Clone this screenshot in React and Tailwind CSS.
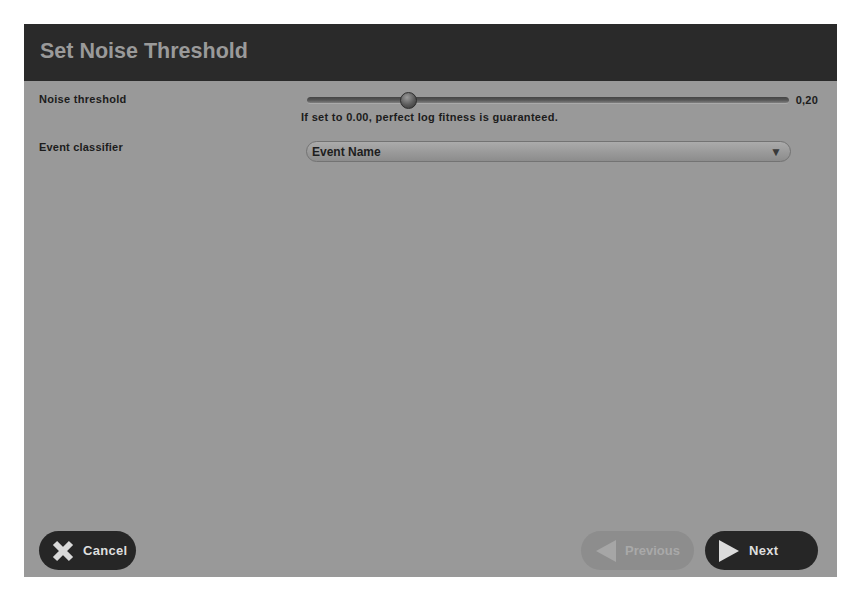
const font = { fontFamily: '"Liberation Sans", Arial, sans-serif' };

function CrossIcon() {
  return (
    <svg width="24" height="24" viewBox="0 0 24 24" className="shrink-0">
      <path d="M4 4 L20 20 M20 4 L4 20" stroke="#d9d9d9" strokeWidth="6" strokeLinecap="butt" />
    </svg>
  );
}

function Triangle({ dir = "right", color }) {
  const d = dir === "right" ? "M1 1 L21 12 L1 23 Z" : "M21 1 L1 12 L21 23 Z";
  return (
    <svg width="22" height="24" viewBox="0 0 22 24" className="shrink-0">
      <path d={d} fill={color} />
    </svg>
  );
}

export default function App() {
  return (
    <div className="w-full h-[601px] bg-white p-6" style={font}>
      <div className="h-full flex flex-col bg-[#999999]">
        <div className="h-[57px] bg-[#2a2a2a] flex items-center pl-4 shrink-0">
          <h1 className="text-[21.5px] font-bold text-[#9a9a9a] leading-none -mt-[2px]">Set Noise Threshold</h1>
        </div>

        <div className="flex-1 flex flex-col pl-[15px] pr-[19px]">
          <div className="grid grid-cols-[262px_1fr] pt-[11px]">
            <div className="text-[11px] font-bold text-[#1c1c1c] leading-4 -mt-px tracking-[0.3px]">Noise threshold</div>
            <div className="flex flex-col">
              <div className="flex items-center h-4">
                <div className="relative flex-1 ml-[6px] h-[7px] rounded-full bg-gradient-to-b from-[#444444] via-[#555555] to-[#808080] border-b border-[#aaaaaa]">
                  <div className="absolute left-[93px] -top-[5px] w-[17px] h-[17px] rounded-full border border-[#2e2e2e] bg-[radial-gradient(circle_at_40%_30%,#9a9a9a,#5a5a5a_55%,#333333)]" />
                </div>
                <span className="ml-[7px] text-[11px] font-bold text-[#1c1c1c] tracking-[0.2px]">0,20</span>
              </div>
              <p className="mt-[3px] text-[11px] font-bold text-[#1c1c1c] leading-[13px] tracking-[0.3px]">
                If set to 0.00, perfect log fitness is guaranteed.
              </p>
            </div>

            <div className="text-[11px] font-bold text-[#1c1c1c] mt-[15px] leading-4 tracking-[0.2px]">Event classifier</div>
            <div className="mt-[17px] pr-[27px]">
              <div className="ml-[5px] h-[21px] rounded-full border border-[#737373] bg-gradient-to-b from-[#ababab] to-[#8c8c8c] flex items-center justify-between pl-[5px] pr-[8px]">
                <span className="text-[12px] font-bold text-[#1e1e1e]">Event Name</span>
                <span className="text-[12px] text-[#3a3a3a] leading-none">▼</span>
              </div>
            </div>
          </div>

          <div className="mt-auto mb-[7px] flex items-center">
            <button className="h-[39px] w-[97px] rounded-full bg-[#262626] flex items-center pl-[12px] gap-[8px]">
              <CrossIcon />
              <span className="text-[13px] font-bold text-[#dedede] tracking-[0.3px]">Cancel</span>
            </button>
            <div className="flex-1" />
            <button className="h-[39px] w-[113px] rounded-full bg-[#8d8d8d] flex items-center pl-[14px] gap-[8px]">
              <Triangle dir="left" color="#a6a6a6" />
              <span className="text-[13px] font-bold text-[#a9a9a9]">Previous</span>
            </button>
            <button className="ml-[11px] h-[39px] w-[113px] rounded-full bg-[#262626] flex items-center pl-[13px] gap-[9px]">
              <Triangle dir="right" color="#dcdcdc" />
              <span className="text-[13px] font-bold text-[#dedede] tracking-[0.3px]">Next</span>
            </button>
          </div>
        </div>
      </div>
    </div>
  );
}
